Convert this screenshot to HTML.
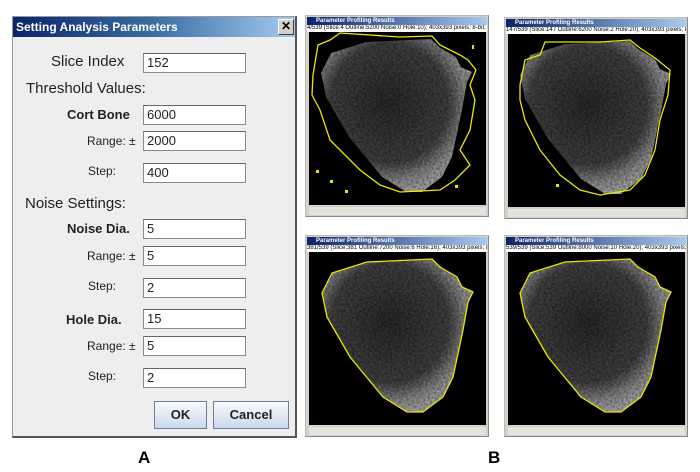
<!DOCTYPE html>
<html><head><style>
body{margin:0;width:700px;height:472px;background:#fff;position:relative;overflow:hidden;font-family:"Liberation Sans",sans-serif}
.a{position:absolute}
.dlg{left:12px;top:16px;width:282px;height:419px;background:#eeeeee;border:1px solid #9a9a9a;border-right:2px solid #555;border-bottom:2px solid #555}
.tb{left:0;top:0;width:282px;height:20px;background:linear-gradient(90deg,#0a246a,#3a6ea5 50%,#a6caf0);color:#fff;font-weight:bold;font-size:12px;line-height:20px;text-indent:3px}
.x{left:265px;top:2px;width:14px;height:14px;background:#d4d0c8;border:1px solid #fff;border-right-color:#404040;border-bottom-color:#404040;color:#000;font-size:12px;line-height:13px;text-align:center;text-indent:0}
.f{position:absolute;left:142px;width:101px;height:18px;background:#fff;border:1px solid #8a8a8a;border-top-color:#666;font-size:13px;line-height:18px;text-indent:3px;color:#222}
.l{position:absolute;color:#222;white-space:nowrap}
.h{font-size:15px}
.b{font-size:13px;font-weight:bold}
.r{font-size:12px}
.btn{position:absolute;height:26px;border:1px solid #6a7f9a;background:linear-gradient(#fafcff,#c9d8ea);font-weight:bold;font-size:13px;text-align:center;line-height:26px;color:#222}
.w{position:absolute;width:182px;height:200px;background:#d4d0c8;border:1px solid #bbb;border-right-color:#888;border-bottom-color:#888}
.wt{position:absolute;left:1px;top:1px;width:180px;height:8px;background:linear-gradient(90deg,#0a246a,#a6caf0);color:#fff;font-size:6px;line-height:8px;font-weight:bold;text-indent:9px}
.wi{position:absolute;left:1px;top:9px;width:180px;height:7px;background:#fff;font-size:6px;line-height:7px;white-space:nowrap;overflow:hidden;color:#000}
.img{position:absolute;left:3px;top:16px;width:177px;height:173px;background:#000}
.sb{position:absolute;left:3px;top:191px;width:177px;height:8px;background:#e4e2dc}
</style></head><body>
<div class="a dlg">
 <div class="a tb">Setting Analysis Parameters<div class="a x">✕</div></div>
 <div class="l h" style="left:38px;top:36px">Slice Index</div>
 <div class="f" style="left:130px;top:36px">152</div>
 <div class="l h" style="left:13px;top:63px">Threshold Values:</div>
 <div class="l b" style="left:54px;top:90px">Cort Bone</div>
 <div class="f" style="left:130px;top:88px">6000</div>
 <div class="l r" style="left:74px;top:117px">Range: ±</div>
 <div class="f" style="left:130px;top:114px">2000</div>
 <div class="l r" style="left:75px;top:147px">Step:</div>
 <div class="f" style="left:130px;top:146px">400</div>
 <div class="l h" style="left:12px;top:178px">Noise Settings:</div>
 <div class="l b" style="left:54px;top:204px">Noise Dia.</div>
 <div class="f" style="left:130px;top:202px">5</div>
 <div class="l r" style="left:74px;top:232px">Range: ±</div>
 <div class="f" style="left:130px;top:229px">5</div>
 <div class="l r" style="left:75px;top:262px">Step:</div>
 <div class="f" style="left:130px;top:261px">2</div>
 <div class="l b" style="left:53px;top:295px">Hole Dia.</div>
 <div class="f" style="left:130px;top:292px">15</div>
 <div class="l r" style="left:74px;top:322px">Range: ±</div>
 <div class="f" style="left:130px;top:319px">5</div>
 <div class="l r" style="left:75px;top:352px">Step:</div>
 <div class="f" style="left:130px;top:351px">2</div>
 <div class="btn" style="left:141px;top:384px;width:51px">OK</div>
 <div class="btn" style="left:200px;top:384px;width:74px">Cancel</div>
</div>
<div class="l" style="left:138px;top:448px;font-size:17px;font-weight:bold;color:#000">A</div>
<div class="l" style="left:488px;top:448px;font-size:17px;font-weight:bold;color:#000">B</div>

<div class="w" style="left:305px;top:15px"><div class="wt">Parameter Profiling Results</div><div class="wi">4/539 (Slice:4 Outline:5200 Noise:0 Hole:10); 403x393 pixels; 8-bit; 81MB</div><div class="img"></div><div class="sb"></div></div>
<div class="w" style="left:504px;top:17px"><div class="wt">Parameter Profiling Results</div><div class="wi">147/539 (Slice:147 Outline:6200 Noise:2 Hole:20); 403x393 pixels; 8-bit; 81MB</div><div class="img"></div><div class="sb"></div></div>
<div class="w" style="left:305px;top:235px"><div class="wt">Parameter Profiling Results</div><div class="wi">381/539 (Slice:381 Outline:7200 Noise:6 Hole:16); 403x393 pixels; 8-bit; 81MB</div><div class="img"></div><div class="sb"></div></div>
<div class="w" style="left:504px;top:235px"><div class="wt">Parameter Profiling Results</div><div class="wi">539/539 (Slice:539 Outline:8000 Noise:10 Hole:20); 403x393 pixels; 8-bit; 81MB</div><div class="img"></div><div class="sb"></div></div>

<svg class="a" style="left:0;top:0" width="700" height="472">
<defs>
<radialGradient id="g" cx="0.45" cy="0.42" r="0.6"><stop offset="0" stop-color="#202020"/><stop offset="0.65" stop-color="#333"/><stop offset="0.85" stop-color="#707070"/><stop offset="1" stop-color="#888"/></radialGradient>
<filter id="n" x="0" y="0" width="1" height="1"><feTurbulence type="fractalNoise" baseFrequency="0.45" numOctaves="2" seed="3"/><feColorMatrix type="matrix" values="1.6 0 0 0 -0.5  1.6 0 0 0 -0.5  1.6 0 0 0 -0.5  0 0 0 0 1"/><feComposite in2="SourceGraphic" operator="arithmetic" k1="1.3" k2="0" k3="0.7" k4="0"/><feComposite in2="SourceGraphic" operator="in"/></filter>
<g id="bone"><polygon filter="url(#n)" fill="url(#g)" points="16,58 26,38 61,27 126,24 134,32 151,42 156,52 167,57 162,67 157,95 147,142 137,162 117,177 101,177 77,162 44,122 21,82"/></g>
</defs>
<use href="#bone" transform="translate(305,15)"/>
<use href="#bone" transform="translate(504,17)"/>
<use href="#bone" transform="translate(306,235)"/>
<use href="#bone" transform="translate(504,235)"/>
<g fill="none" stroke="#e8e800" stroke-width="1.3">
<polygon points="313,75 318,45 330,40 340,33 400,37 432,36 440,45 460,55 468,60 476,70 470,85 475,100 470,130 460,150 470,165 455,180 440,190 400,192 380,185 360,170 330,140 320,110 312,95"/>
<polygon points="520,85 525,60 540,55 545,42 600,42 630,40 640,48 655,58 670,70 668,95 660,120 655,150 645,175 630,190 600,195 580,190 560,175 540,150 525,120 520,100"/>
<polygon points="322,293 332,273 367,262 432,259 440,267 457,277 462,287 473,292 468,302 463,330 453,377 443,397 423,412 407,412 383,397 350,357 327,317"/>
<polygon points="520,293 530,273 565,262 630,259 638,267 655,277 660,287 671,292 666,302 661,330 651,377 641,397 621,412 605,412 581,397 548,357 525,317"/>
</g>
<g fill="#e8e800"><rect x="330" y="180" width="3" height="3"/><rect x="345" y="190" width="3" height="3"/><rect x="472" y="45" width="2" height="4"/><rect x="316" y="170" width="3" height="3"/><rect x="455" y="185" width="3" height="3"/><rect x="556" y="184" width="3" height="3"/></g>
</svg>
</body></html>
